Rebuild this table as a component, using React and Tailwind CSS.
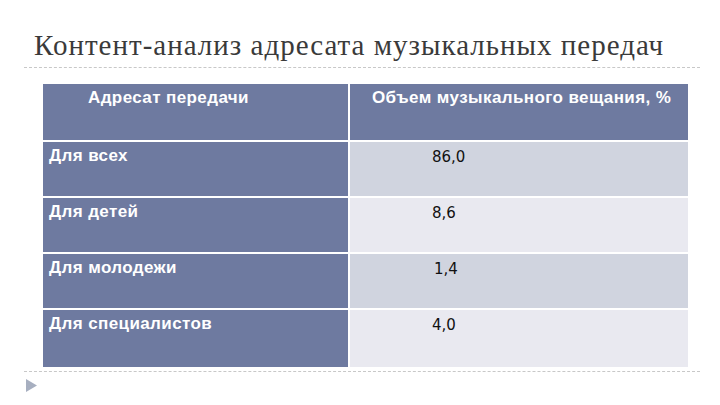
const rows = [
  { name: "Для всех", value: "86,0", shade: "bg-[#d0d4df]", pad: "pl-[82px]" },
  { name: "Для детей", value: "8,6", shade: "bg-[#e9e9f0]", pad: "pl-[82px]" },
  { name: "Для молодежи", value: "1,4", shade: "bg-[#d0d4df]", pad: "pl-[84px]" },
  { name: "Для специалистов", value: "4,0", shade: "bg-[#e9e9f0]", pad: "pl-[82px]" },
];

export default function App() {
  return (
    <div className="w-[720px] h-[405px] bg-white overflow-hidden relative">
      <div className="pt-[27px] pl-[34px] h-[67px]">
        <h1 className="text-[29px] leading-[36px] text-[#3a3a3a] font-['Liberation_Serif',serif] tracking-[1px] whitespace-nowrap">
          Контент-анализ адресата музыкальных передач
        </h1>
      </div>
      <div className="mx-[24px] w-[676px] border-t border-dashed border-[#c8c8c8]" />

      <div className="ml-[43px] mt-[16px] w-[645px] flex flex-col gap-[2px] font-['Liberation_Sans',Arial,sans-serif] text-[17px] leading-[20px] font-bold tracking-[0.4px]">
        <div className="flex gap-[2px] h-[56px]">
          <div className="w-[305px] bg-[#6e7aa0] text-white pl-[45px] pt-[4px]">Адресат передачи</div>
          <div className="flex-1 bg-[#6e7aa0] text-white pl-[22px] pt-[4px] whitespace-nowrap">Объем музыкального вещания, %</div>
        </div>
        {rows.map((r, i) => (
          <div key={i} className={"flex gap-[2px] " + (i === 3 ? "h-[57px]" : "h-[54px]")}>
            <div className="w-[305px] bg-[#6e7aa0] text-white pl-[6px] pt-[4px]">{r.name}</div>
            <div className={"flex-1 text-[#111] pt-[5px] font-['DejaVu_Sans',sans-serif] font-normal tracking-normal text-[15px] " + r.shade + " " + r.pad}>{r.value}</div>
          </div>
        ))}
      </div>

      <div className="mx-[24px] mt-[4px] w-[676px] border-t border-dashed border-[#c8c8c8]" />
      <svg className="absolute left-[26px] top-[379px]" width="11" height="13" viewBox="0 0 11 13">
        <polygon points="0,0 11,6.5 0,13" fill="#a7afc0" />
      </svg>
    </div>
  );
}
